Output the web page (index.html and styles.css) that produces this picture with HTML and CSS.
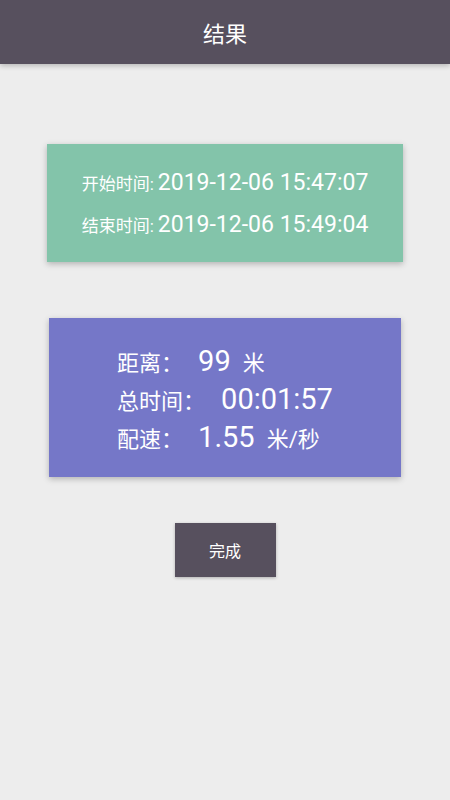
FILE: index.html
```html
<!DOCTYPE html>
<html lang="zh-CN">
<head>
<meta charset="utf-8">
<title>结果</title>
<link rel="stylesheet" href="styles.css">
</head>
<body>
<header class="appbar"><h1 class="appbar-title">结果</h1></header>
<main class="content">
  <section class="card card-time">
    <div class="time-row"><span class="time-label">开始时间:</span><span class="time-value">2019-12-06 15:47:07</span></div>
    <div class="time-row"><span class="time-label">结束时间:</span><span class="time-value">2019-12-06 15:49:04</span></div>
  </section>
  <section class="card card-stats">
    <div class="stats">
      <div class="stat-row"><span class="stat-label">距离：</span><span class="stat-value v-short">99</span><span class="stat-unit">米</span></div>
      <div class="stat-row"><span class="stat-label">总时间：</span><span class="stat-value v-long">00:01:57</span></div>
      <div class="stat-row"><span class="stat-label">配速：</span><span class="stat-value v-short">1.55</span><span class="stat-unit">米/秒</span></div>
    </div>
  </section>
  <button class="done-btn" type="button">完成</button>
</main>
</body>
</html>
```
FILE: styles.css
```css
html, body {
  margin: 0;
  padding: 0;
}
body {
  width: 450px;
  min-height: 800px;
  background: #ededed;
  font-family: Roboto, "Noto Sans CJK SC", sans-serif;
  color: #ffffff;
}
.appbar {
  height: 64px;
  background: #57505e;
  display: flex;
  align-items: center;
  justify-content: center;
  box-shadow: 0 2px 5px rgba(0, 0, 0, 0.22);
  position: relative;
  z-index: 1;
}
.appbar-title {
  margin: 0;
  font-size: 22px;
  font-weight: 400;
  color: #ffffff;
}
.content {
  display: flex;
  flex-direction: column;
  align-items: center;
  padding-top: 80px;
}
.card {
  box-shadow: 0 2px 6px rgba(0, 0, 0, 0.25);
}
.card-time {
  width: 356px;
  background: #83c4aa;
  padding: 17px 0;
  display: flex;
  flex-direction: column;
  align-items: center;
}
.time-row {
  height: 42px;
  display: flex;
  align-items: center;
  gap: 4px;
}
.time-label {
  font-size: 17px;
}
.time-value {
  font-size: 23px;
}
.card-stats {
  margin-top: 56px;
  width: 352px;
  background: #7577c8;
  padding: 24px 0 21px;
  display: flex;
  justify-content: center;
}
.stats {
  display: flex;
  flex-direction: column;
  align-items: flex-start;
}
.stat-row {
  height: 38px;
  display: flex;
  align-items: center;
  font-size: 22px;
}
.stat-value {
  font-size: 29px;
}
.v-short {
  margin-left: 15px;
}
.v-long {
  margin-left: 16px;
}
.stat-unit {
  margin-left: 12px;
}
.done-btn {
  margin-top: 46px;
  width: 101px;
  height: 54px;
  border: none;
  background: #57505e;
  color: #ffffff;
  font-family: Roboto, "Noto Sans CJK SC", sans-serif;
  font-size: 16px;
  box-shadow: 0 1px 3px rgba(0, 0, 0, 0.25);
  padding: 0;
}
```
